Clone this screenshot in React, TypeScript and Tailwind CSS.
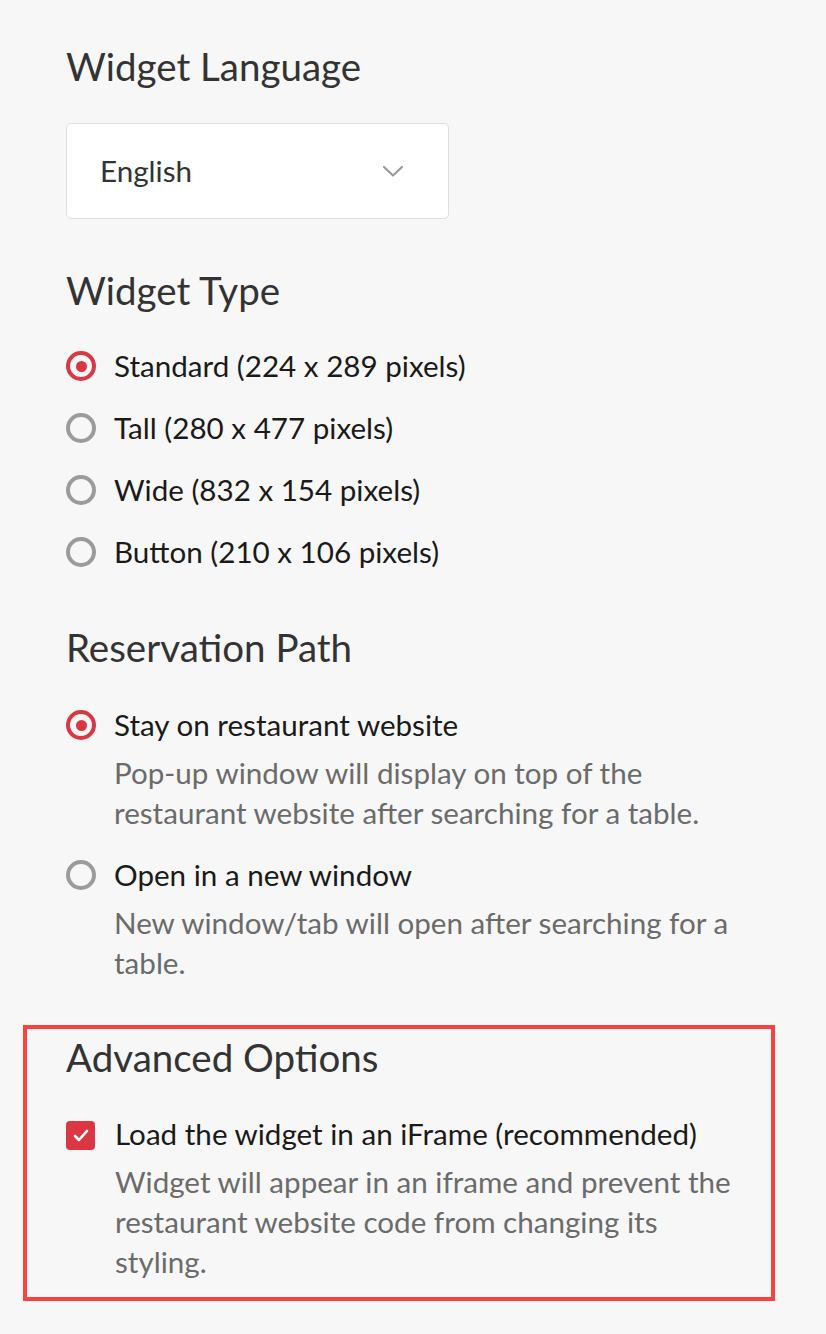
import React from "react";

function Radio({ checked }: { checked?: boolean }) {
  return checked ? (
    <span className="flex h-[30px] w-[30px] shrink-0 items-center justify-center rounded-full border-4 border-[#da3743]">
      <span className="h-[11px] w-[11px] rounded-full bg-[#da3743]" />
    </span>
  ) : (
    <span className="h-[30px] w-[30px] shrink-0 rounded-full border-4 border-[#9b9b9b]" />
  );
}

function Heading({ children, className = "" }: { children: React.ReactNode; className?: string }) {
  return <h2 className={`text-[38.5px] leading-[44px] font-normal text-[#333333] ${className}`}>{children}</h2>;
}

export default function App() {
  const types = [
    { label: "Standard (224 x 289 pixels)", checked: true },
    { label: "Tall (280 x 477 pixels)" },
    { label: "Wide (832 x 154 pixels)" },
    { label: "Button (210 x 106 pixels)" },
  ];
  return (
    <div className="min-h-screen bg-[#f7f7f7] pt-[44px] pb-[33px] font-['Lato',sans-serif]">
      <div className="px-[66px]">
        <Heading>Widget Language</Heading>
        <div className="mt-[35px] flex h-[96px] w-[383px] items-center justify-between rounded-[5px] border border-[#dedede] bg-white pl-[33px] pr-[45px]">
          <span className="text-[29.6px] leading-[38px] text-[#333333]">English</span>
          <svg width="20" height="11" viewBox="0 0 20 11" fill="none">
            <path d="M1 1l9 8.5L19 1" stroke="#9a9a9a" strokeWidth="2.2" strokeLinecap="round" strokeLinejoin="round" />
          </svg>
        </div>

        <Heading className="mt-[49px]">Widget Type</Heading>
        <div className="mt-[23px] flex flex-col">
          {types.map((t) => (
            <label key={t.label} className="flex h-[62px] items-center gap-[18px]">
              <Radio checked={t.checked} />
              <span className="text-[29.6px] leading-[38px] text-[#1a1a1a]">{t.label}</span>
            </label>
          ))}
        </div>

        <Heading className="mt-[42px]">Reservation Path</Heading>
        <div className="mt-[36px] flex flex-col">
          <div>
            <div className="flex h-[40px] items-center gap-[18px]">
              <Radio checked />
              <span className="text-[29.6px] leading-[38px] text-[#1a1a1a]">Stay on restaurant website</span>
            </div>
            <p className="mt-[8px] pl-[48px] text-[29.6px] leading-[39.5px] text-[#6b6b6b]">
              Pop-up window will display on top of the
              <br />
              restaurant website after searching for a table.
            </p>
          </div>
          <div className="mt-[23px]">
            <div className="flex h-[40px] items-center gap-[18px]">
              <Radio />
              <span className="text-[29.6px] leading-[38px] text-[#1a1a1a]">Open in a new window</span>
            </div>
            <p className="mt-[8px] pl-[48px] text-[29.6px] leading-[39.5px] text-[#6b6b6b]">
              New window/tab will open after searching for a
              <br />
              table.
            </p>
          </div>
        </div>
      </div>

      <div className="mt-[43px] ml-[23px] w-[752px] border-4 border-[#f94141] pt-[6px] pb-[15px] pl-[39px]">
        <Heading>Advanced Options</Heading>
        <div className="mt-[36px] flex h-[40px] items-center gap-[20px]">
          <span className="flex h-[29px] w-[29px] shrink-0 items-center justify-center rounded-[4px] bg-[#da3743]">
            <svg width="16" height="13" viewBox="0 0 16 13" fill="none">
              <path d="M2 7l4 4 8-9" stroke="white" strokeWidth="2.6" strokeLinecap="round" strokeLinejoin="round" />
            </svg>
          </span>
          <span className="-mt-[2px] text-[29.6px] leading-[38px] text-[#1a1a1a]">Load the widget in an iFrame (recommended)</span>
        </div>
        <p className="mt-[7px] pl-[49px] text-[29.6px] leading-[40px] text-[#6b6b6b]">
          Widget will appear in an iframe and prevent the
          <br />
          restaurant website code from changing its
          <br />
          styling.
        </p>
      </div>
    </div>
  );
}
